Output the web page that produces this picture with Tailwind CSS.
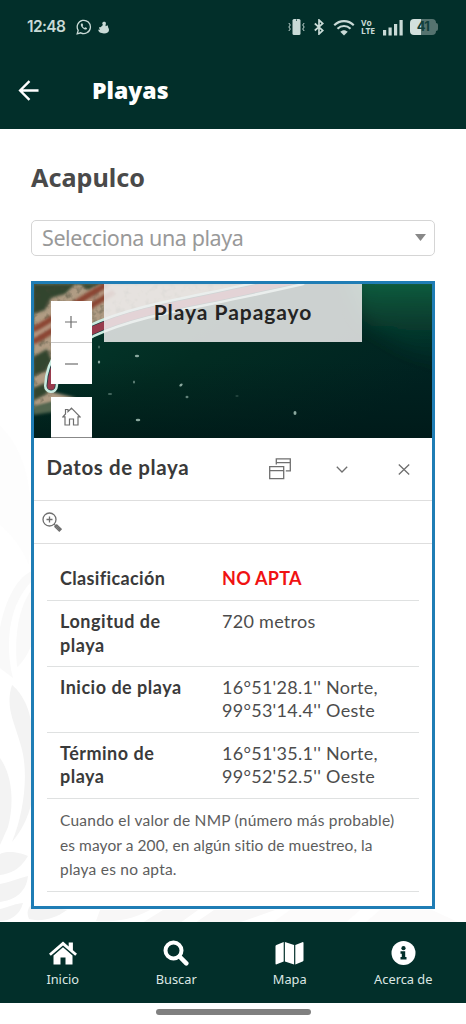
<!DOCTYPE html>
<html lang="es">
<head>
<meta charset="utf-8">
<title>Playas</title>
<script src="https://cdn.jsdelivr.net/npm/@tailwindcss/browser@4"></script>
</head>
<body class="bg-white font-['Noto_Sans',sans-serif]">
<div class="flex h-[1024px] w-[466px] flex-col overflow-hidden">

<header class="h-[128.5px] shrink-0 bg-[#022f2a] text-[#c9dad6]">
  <div class="flex h-[54px] items-center pl-[27px] pr-[28px]">
    <span class="w-[49px] font-['Inter',sans-serif] text-[15.5px] font-semibold leading-5 tracking-[-0.6px]">12:48</span>
    <svg class="h-4 w-4" viewBox="0 0 16 16" fill="none" stroke="currentColor" stroke-width="1.3"><path d="M1.2 14.8 2.2 11.4A6.6 6.6 0 1 1 4.8 13.8Z"/><path d="M5.3 4.4c-.9.8-.6 2.500 1 4.300 1.700 1.800 3.500 2.300 4.500 1.300l.2-.9-1.700-.9-.9.8C7.500 8.700 6.900 8 6.600 7.100l.6-.8-.7-1.800Z" fill="currentColor" stroke="none"/></svg>
    <svg class="ml-[6px] h-[13px] w-[12px]" viewBox="0 0 12 13" fill="currentColor"><path d="M4.200 2.200C4.200.6 7.600-.2 7.900 2c.2 1.200-.7 2-.2 3.200.6-.5 1.600-1.100 2.300-.6-.3 1 .3 2 .7 2.900C11.800 10.200 9.800 12.500 6 12.500 2.500 12.500.1 10.900.3 8.600c.8.400 1.200.3 1.700-.1C1.200 7.700.8 6.700 1.400 5.900c.8.500 1.500.2 2-.4.600-.8 1.400-1.200 1.300-2Z"/></svg>
    <div class="grow"></div>
    <svg class="h-[18px] w-[17px]" viewBox="0 0 17 18"><rect x="4.500" y="1" width="8" height="16" rx="1.500" fill="currentColor"/><path d="M8.500 1.500v1.200" stroke="#022f2a"/><path d="M.8 5l1.500 2L.8 9l1.500 2-1.500 2M16.200 5l-1.500 2 1.500 2-1.500 2 1.500 2" fill="none" stroke="currentColor" stroke-width="1"/></svg>
    <svg class="ml-[9px] h-4 w-[10px]" viewBox="0 0 10 16" fill="none" stroke="currentColor" stroke-width="1.700"><path d="M.8 4.500 8.800 11.500 5 15V1l3.800 3.500L.8 11.500"/></svg>
    <svg class="ml-[9px] h-[17px] w-[22px]" viewBox="0 0 23 17" fill="none" stroke="currentColor" stroke-width="2.200"><path d="M1.300 6.200C7 .4 16 .4 21.700 6.200M4.700 9.800c3.900-3.900 9.700-3.900 13.600 0"/><path d="M7.600 13c2.300-2.200 5.500-2.200 7.800 0l-3.900 3.800Z" fill="currentColor" stroke="none"/></svg>
    <div class="ml-[6px] flex w-[15px] flex-col font-['Open_Sans',sans-serif] text-[8.500px] font-bold leading-[8.500px]"><span>Vo</span><span class="tracking-[-0.200px]">LTE</span></div>
    <svg class="ml-[7px] h-[17px] w-[20px]" viewBox="0 0 20 17" fill="currentColor"><path d="M0 11h3.200v5.500H0ZM5.500 8.500h3.200v8H5.500ZM11 5h3.200v11.500H11ZM16.500 1h3.200v15.500h-3.200Z"/></svg>
    <div class="ml-[7px] flex h-4 w-[28px] items-center">
      <div class="flex h-[15.500px] w-[26px] items-center justify-center rounded-[4px] bg-linear-to-r from-[#d3e0dd] from-42% to-[#55736f] to-42% font-['Inter',sans-serif] text-[13px] font-bold tracking-[-0.8px] text-[#12403b]">41</div>
      <div class="h-[8px] w-[2px] rounded-r-full bg-[#55736f]"></div>
    </div>
  </div>
  <div class="flex h-[73px] items-center pl-[18px] text-white">
    <svg class="h-[21px] w-[22px]" viewBox="0 0 22 22" fill="none" stroke="currentColor" stroke-width="2.500"><path d="M21 11H2M11.500 1.200 1.700 11l9.800 9.800"/></svg>
    <h1 class="-mt-[2px] ml-[52px] font-['Open_Sans',sans-serif] text-[23px] font-extrabold leading-8">Playas</h1>
  </div>
</header>

<main class="relative h-[793.500px] shrink-0 overflow-hidden pl-[31px] pr-[31px]">
  <svg class="absolute left-0 top-0 -z-10 h-[794px] w-[466px]" viewBox="0 128 466 794" fill="#f3f3f3">
    <path d="M0 425C18 442 31 470 32 520L29 564C19 540 6 529 0 524Z" fill="#fdfdfd"/>
    <path d="M32 570C18 576 6 596 0 627V667L13 677C4 640 10 602 32 580Z" fill="#f9f9f9"/>
    <path d="M32 588C19 606 14 632 17 666C24 660 28 652 32 643Z" fill="#f9f9f9"/>
    <path d="M12 684C5 706 14 720 21 745C29 772 24 812 12 841C22 829 28 817 32 800V727C30 705 20 690 12 684Z"/>
    <path d="M0 757C13 775 14 804 8 826L0 844Z"/>
    <path d="M0 853C8 849 21 852 28 855C20 869 9 873 0 874ZM0 883C10 881 20 877 28 875C26 893 13 899 0 901ZM0 908C8 906 18 902 23 902C20 914 10 920 0 920Z"/>
    <path d="M32 903L67 909C55 918 40 921 29 918C26 911 28 907 32 903Z"/>
    <path d="M100 909H150C130 920 112 921 96 920ZM163 909H198L180 922H142ZM214 909H275L238 922H195Z" fill="#f8f7f7"/>
    <path d="M290 909H360L345 922H272ZM380 909H432L460 922H365Z" fill="#fcfbfb"/>
  </svg>
  <h2 class="mt-[32px] h-8 font-['Noto_Sans',sans-serif] text-[25.200px] font-bold leading-8 text-[#4a4a4a]">Acapulco</h2>
  <div class="mt-[27px] flex h-[36.500px] items-center justify-between rounded-[5px] border-[1.500px] border-[#d5d5d5] bg-white pl-[10px] pr-[8px]">
    <span class="mt-px text-[21.500px] leading-8 tracking-[-0.420px] text-[#999]">Selecciona una playa</span>
    <svg class="h-[7px] w-[11px]" viewBox="0 0 11 7" fill="#888"><path d="M0 0h11L5.500 7Z"/></svg>
  </div>

  <section class="mt-[25px] h-[627.500px] w-[404px] border-[3px] border-[#1f7db5] bg-white font-['Lato',sans-serif] text-[#3d3d3d]">
    <div class="relative h-[154px] overflow-hidden">
      <svg class="absolute inset-0 h-full w-full" viewBox="34 284 398 154" preserveAspectRatio="none">
        <defs>
          <linearGradient id="sea" x1="0" y1="0" x2="1" y2=".6"><stop offset="0" stop-color="#053c2f"/><stop offset=".5" stop-color="#022c22"/><stop offset="1" stop-color="#002221"/></linearGradient>
          <linearGradient id="algae" x1="0" y1="0" x2="0" y2="1"><stop offset="0" stop-color="#177048"/><stop offset="1" stop-color="#0a4033" stop-opacity="0"/></linearGradient>
          <linearGradient id="deep" x1="0" y1="0" x2="0" y2="1"><stop offset=".5" stop-color="#001a18" stop-opacity="0"/><stop offset="1" stop-color="#001716" stop-opacity=".7"/></linearGradient>
          <filter id="soft"><feGaussianBlur stdDeviation="1.400"/></filter>
          <filter id="haze" x="-.3" y="-.3" width="1.600" height="1.600"><feGaussianBlur stdDeviation="9"/></filter>
          <filter id="grain" x="0" y="0" width="1" height="1" color-interpolation-filters="sRGB"><feTurbulence type="fractalNoise" baseFrequency=".13" numOctaves="3" seed="9"/><feColorMatrix values="0 0 0 0 .25  0 0 0 0 .27  0 0 0 0 .2  3 0 0 0 -1.500"/><feComposite in2="SourceGraphic" operator="in"/></filter>
        </defs>
        <path fill="url(#sea)" d="M33 284h400v156H33Z"/>
        <path d="M345 262H460V375L405 350L360 318Z" fill="url(#algae)" filter="url(#haze)"/>
        <path fill="url(#deep)" d="M33 284h400v156H33Z"/>
        <path d="M33 284H260C175 298 125 312 93 334L58 374L52 392L76 398L50 404L33 410Z" fill="#b09c84" filter="url(#soft)"/>
        <path d="M33 406l22-5 20 1-16 9-26 4Z" fill="#52664f" filter="url(#soft)"/>
        <g filter="url(#soft)" fill="#33452d"><path d="M33 284h42l-10 10-14 4-6 12-12 4Z"/><path d="M33 357l14-8 5 12-6 10-13 5ZM33 388l12-5 3 10-15 8ZM80 284h20l-12 6Z"/></g>
        <path d="M33 284H240C175 298 125 312 93 334L58 374L52 395L33 408Z" filter="url(#grain)" opacity=".5"/>
        <g fill="none" filter="url(#soft)"><path d="M33 330C60 315 83 297 108 284M33 342C65 324 89 306 114 292" stroke="#8b4530" stroke-width="6"/><path d="M33 336C62 320 83 303 112 288" stroke="#c0937c" stroke-width="1.500"/></g>
        <g fill="none" stroke-linecap="round">
          <path d="M51 386C52 361 68 341 91 331C134 311 190 303 240 292L300 279" stroke="#c9ebe0" stroke-width="14"/>
          <path d="M51 386C52 361 68 341 91 331C134 311 190 303 240 292L300 279" stroke="#173e43" stroke-width="9"/>
          <path d="M51 386C52 361 68 341 91 331C134 311 190 303 240 292L300 279" stroke="#983b4d" stroke-width="7.500"/>
        </g>
        <g fill="#8ba99f"><ellipse cx="137" cy="356" rx="2.200" ry="1.300"/><ellipse cx="99" cy="362" rx="1.200" ry="1.600"/><ellipse cx="99" cy="347" rx="1" ry="1.500" opacity=".5"/><ellipse cx="134" cy="382" rx="1" ry="1.600" opacity=".7"/><ellipse cx="181" cy="385" rx="1.900" ry="1.200" transform="rotate(-40 181 385)"/><ellipse cx="187" cy="397" rx="1.500" ry="1.200" opacity=".7"/><ellipse cx="110" cy="394" rx="2.200" ry="1" opacity=".5"/><ellipse cx="138" cy="420" rx="2.300" ry="1.300"/><ellipse cx="295" cy="413" rx="1.500" ry="1.900"/><ellipse cx="237" cy="396" rx="1.700" ry=".8" opacity=".35"/></g>
      </svg>
      <div class="absolute left-[70px] top-0 flex h-[58px] w-[258px] justify-center bg-[#f0eeee]/85 pt-[13px]">
        <span class="text-[21px] font-bold leading-[30px] tracking-[0.950px] text-[#242424]">Playa Papagayo</span>
      </div>
      <div class="absolute left-[16.500px] top-[17px] flex w-[41px] flex-col text-[#6e6e6e]">
        <div class="flex h-[42px] items-center justify-center border-b border-[#c8c8c8] bg-white"><svg class="h-3 w-3" viewBox="0 0 12 12" fill="none" stroke="currentColor" stroke-width="1.200"><path d="M0 6h12M6 0v12"/></svg></div>
        <div class="flex h-[41px] items-center justify-center bg-white"><svg class="h-3 w-[13px]" viewBox="0 0 13 12" stroke="currentColor" stroke-width="1.200"><path d="M0 6h13"/></svg></div>
        <div class="mt-[12.500px] flex h-[41.500px] items-center justify-center border-b border-[#888] bg-white"><svg class="h-[19px] w-[19px]" viewBox="0 0 19 19" fill="none" stroke="currentColor" stroke-width="1.200"><path d="M9.500 1.200 18 9.800H16V18H11.500V12H7.500V18H3V9.800H1L3.500 7V2.500H6V4.600Z"/></svg></div>
      </div>
    </div>
    <div class="flex h-[63px] items-center border-b border-[#dedede] pl-[12.500px] pr-[22px] text-[#6f6f6f]">
      <h3 class="-mt-[5px] grow text-[20.500px] font-bold leading-7 tracking-[0.600px] text-[#3a3a3a]">Datos de playa</h3>
      <svg class="h-[22px] w-[22px]" viewBox="0 0 22 22" fill="none" stroke="currentColor" stroke-width="1.300"><path d="M.7 8.700h14v12H.7ZM.7 12.600h14M7.300 6.500V.8h14v12h-4.500M7.300 4.600h14"/></svg>
      <svg class="ml-[45px] h-[7px] w-[12px]" viewBox="0 0 12 7" fill="none" stroke="currentColor" stroke-width="1.300"><path d="M.8.700 6 6 11.200.7"/></svg>
      <svg class="ml-[50px] h-[11px] w-[12px]" viewBox="0 0 12 11" fill="none" stroke="currentColor" stroke-width="1.300"><path d="M.8.500l10.400 10M11.200.500.8 10.500"/></svg>
    </div>
    <div class="flex h-[43px] items-center border-b border-[#dedede] pl-[8px] text-[#6f6f6f]">
      <svg class="h-5 w-5" viewBox="0 0 20 20" fill="none" stroke="currentColor" stroke-width="1.300"><circle cx="7.500" cy="7.500" r="6.500"/><path d="M7.500 4.500v6M4.500 7.500h6M12.200 12.200l1.300 1.300M12.900 14.800l1.900-1.900 4.400 4.300-1.900 1.900ZM14 13.900l4.300 4.300"/></svg>
    </div>
    <div class="ml-[13px] w-[372px] text-[18px] leading-[23.700px] tracking-[0.280px] text-[#4c4c4c]">
      <div class="flex h-[57px] border-b border-[#dfe1e1] pl-[13px] pt-[23px]"><div class="w-[162px] font-bold tracking-[0.360px] text-[#3a3a3a]">Clasificación</div><div class="font-bold text-[#f01212]">NO APTA</div></div>
      <div class="flex h-[66px] border-b border-[#dfe1e1] pl-[13px] pt-[9px]"><div class="w-[162px] font-bold tracking-[0.550px] text-[#3a3a3a]">Longitud de<br>playa</div><div>720 metros</div></div>
      <div class="flex h-[66px] border-b border-[#dfe1e1] pl-[13px] pt-[8.500px]"><div class="w-[162px] font-bold tracking-[0.500px] text-[#3a3a3a]">Inicio de playa</div><div>16°51'28.1'' Norte,<br>99°53'14.4'' Oeste</div></div>
      <div class="flex h-[66px] border-b border-[#dfe1e1] pl-[13px] pt-[8.500px]"><div class="w-[162px] font-bold tracking-[0.500px] text-[#3a3a3a]">Término de<br>playa</div><div>16°51'35.1'' Norte,<br>99°52'52.5'' Oeste</div></div>
      <div class="h-[93px] whitespace-nowrap border-b border-[#dfe1e1] pl-[13px] pt-[9px] text-[15.500px] leading-[24.500px] tracking-[0.230px] text-[#5d5d5d]">Cuando el valor de NMP (número más probable)<br><span class="tracking-[0.080px]">es mayor a 200, en algún sitio de muestreo, la</span><br>playa es no apta.</div>
    </div>
  </section>
</main>

<nav class="flex h-[81px] shrink-0 bg-[#022f2a] px-[6px] pt-[18px] text-[12.800px] leading-5 text-[#dce7e4]">
  <a class="flex w-[113.500px] flex-col items-center gap-[2px]"><svg class="h-[27px] w-[28px]" viewBox="0 0 28 27" fill="#fff"><path d="M14 1.500 28 13.700 26.200 15.800 14 5.400 1.800 15.800 0 13.700ZM19.700 2.500h4.200v9.200l-4.200-3.600Z"/><path d="M14 7.300 23.500 15.500V24.500H16.500V17.500H11.500V24.500H4.500V15.500Z"/></svg><span>Inicio</span></a>
  <a class="flex w-[113.500px] flex-col items-center gap-[2px]"><svg class="h-[27px] w-[26px]" viewBox="0 0 26 27" fill="none" stroke="#fff"><circle cx="10.500" cy="10.500" r="8" stroke-width="4"/><path d="M16.500 16.500 23.300 23.300" stroke-width="4.500" stroke-linecap="round"/></svg><span>Buscar</span></a>
  <a class="flex w-[113.500px] flex-col items-center gap-[2px]"><svg class="h-[27px] w-[29px]" viewBox="0 0 29 27" fill="#fff"><path d="M.5 6.200Q.5 5.200 1.400 4.900L8.700 2V21.500L1.700 24.300Q.5 24.700.5 23.500ZM9.900 2 19.100 5V24.500L9.900 21.500ZM20.300 5 27.300 2.200Q28.500 1.800 28.500 3V20.300Q28.500 21.200 27.600 21.600L20.300 24.500Z"/></svg><span>Mapa</span></a>
  <a class="flex w-[113.500px] flex-col items-center gap-[2px]"><svg class="h-[27px] w-[25px]" viewBox="0 0 25 27"><circle cx="12.500" cy="13" r="12" fill="#fff"/><g fill="#022f2a"><circle cx="12.500" cy="8.200" r="2.100"/><path d="M9.500 11.300h4.700v5.700h1.300v2.400h-6v-2.400h1.300v-3.300H9.500Z"/></g></svg><span>Acerca de</span></a>
</nav>
<div class="flex h-[21px] shrink-0 justify-center bg-white pt-[6px]"><div class="h-[5.500px] w-[155px] rounded-full bg-[#808080]"></div></div>
</div>
</body>
</html>
